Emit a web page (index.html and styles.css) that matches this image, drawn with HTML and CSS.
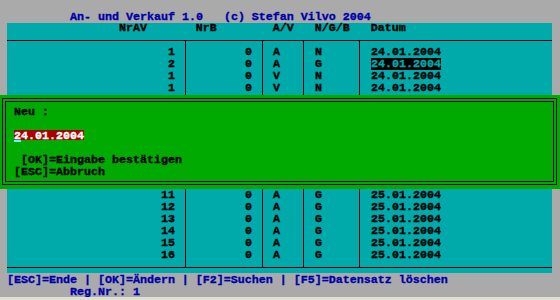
FILE: index.html
```html
<!DOCTYPE html>
<html lang="de">
<head>
    <meta charset="UTF-8">
    <meta name="viewport" content="width=device-width, initial-scale=1.0">
    <title>An- und Verkauf 1.0</title>
    <link rel="stylesheet" href="styles.css">
</head>
<body>

<div class="screen">
    <div class="title">An- und Verkauf 1.0   (c) Stefan Vilvo 2004</div>

    <div class="table table-top">
        <div class="table-head">                NrAV       NrB        A/V   N/G/B   Datum</div>
        <div class="table-body">
            <div class="col col-nrav"><div>1</div><div>2</div><div>1</div><div>1</div></div>
            <div class="col col-nrb"><div>0</div><div>0</div><div>0</div><div>0</div></div>
            <div class="col col-av"><div>A</div><div>A</div><div>V</div><div>V</div></div>
            <div class="col col-ngb"><div>N</div><div>G</div><div>N</div><div>N</div></div>
            <div class="col col-date">
                <div>24.01.2004</div>
                <div><span class="selected">24.01.2004</span></div>
                <div>24.01.2004</div>
                <div>24.01.2004</div>
            </div>
        </div>
    </div>

    <div class="dialog">
        <div class="dialog-frame">
            <div class="dialog-inner">
                <div class="line">Neu :</div>
                <div class="gap"></div>
                <div class="date-line">
                    <div class="date-field">24.01.2004</div>
                    <div class="cursor"></div>
                </div>
                <div class="gap"></div>
                <div class="line"> [OK]=Eingabe bestätigen</div>
                <div class="line">[ESC]=Abbruch</div>
            </div>
        </div>
    </div>

    <div class="table table-bottom">
        <div class="table-body">
            <div class="col col-nrav"><div>11</div><div>12</div><div>13</div><div>14</div><div>15</div><div>16</div></div>
            <div class="col col-nrb"><div>0</div><div>0</div><div>0</div><div>0</div><div>0</div><div>0</div></div>
            <div class="col col-av"><div>A</div><div>A</div><div>A</div><div>A</div><div>A</div><div>A</div></div>
            <div class="col col-ngb"><div>G</div><div>G</div><div>G</div><div>G</div><div>G</div><div>G</div></div>
            <div class="col col-date">
                <div>25.01.2004</div>
                <div>25.01.2004</div>
                <div>25.01.2004</div>
                <div>25.01.2004</div>
                <div>25.01.2004</div>
                <div>25.01.2004</div>
            </div>
        </div>
    </div>

    <div class="status first">[ESC]=Ende | [OK]=Ändern | [F2]=Suchen | [F5]=Datensatz löschen</div>
    <div class="status reg">Reg.Nr.: 1</div>
</div>

</body>
</html>
```

FILE: styles.css
```css
* {
    box-sizing: border-box;
}

body {
    margin: 0;
    background-color: #aaaaaa;
}

.screen {
    width: 560px;
    height: 300px;
    padding-top: 11px;
    overflow: hidden;
    background-color: #aaaaaa;
    border-bottom: 3px solid #e0e0d0;
    font-family: "Liberation Mono", "DejaVu Sans Mono", monospace;
    font-size: 11.67px;
    font-weight: bold;
    line-height: 12px;
    -webkit-text-stroke: 0.35px currentColor;
}

.title,
.table-head,
.line,
.status {
    white-space: pre;
}

.title {
    padding-left: 70px;
    color: #0000aa;
}

/* table */

.table {
    width: 545px;
    margin-left: 7px;
    background-color: #00aaaa;
    color: #000;
}

.table-head {
    line-height: 10px;
    padding-bottom: 7px;
    border-bottom: 1px solid #000;
}

.table-body {
    display: grid;
    grid-template-columns: 178px 77px 41px 56px 193px;
}

.col + .col {
    border-left: 1px solid #000;
}

.table-top .col {
    padding-top: 5px;
    padding-bottom: 1px;
}

.table-bottom {
    padding-bottom: 5px;
}

.table-bottom .table-body {
    border-bottom: 1px solid #000;
}

.table-bottom .col {
    padding-bottom: 6px;
}

.col-nrav,
.col-nrb {
    text-align: right;
    padding-right: 10px;
}

.col-av {
    padding-left: 10px;
}

.col-ngb,
.col-date {
    padding-left: 11px;
}

.selected {
    display: inline-block;
    vertical-align: top;
    height: 12px;
    background-color: #000;
    color: #00aaaa;
}

/* dialog */

.dialog {
    background-color: #00aa00;
    padding: 3px 3px 4px 2px;
}

.dialog-frame {
    border: 1px solid #000;
    padding: 2px;
}

.dialog-inner {
    border: 1px solid #000;
    padding: 4px 0 3px 8px;
    color: #000;
}

.gap {
    height: 12px;
}

.date-field {
    width: 70px;
    height: 10px;
    background-color: #aa0000;
    color: #fff;
}

.cursor {
    width: 7px;
    height: 2px;
    background-color: #55ffff;
}

/* status lines */

.status {
    padding-left: 7px;
    color: #0000aa;
}

.status.first {
    margin-top: 1px;
}

.reg {
    padding-left: 70px;
}
```
